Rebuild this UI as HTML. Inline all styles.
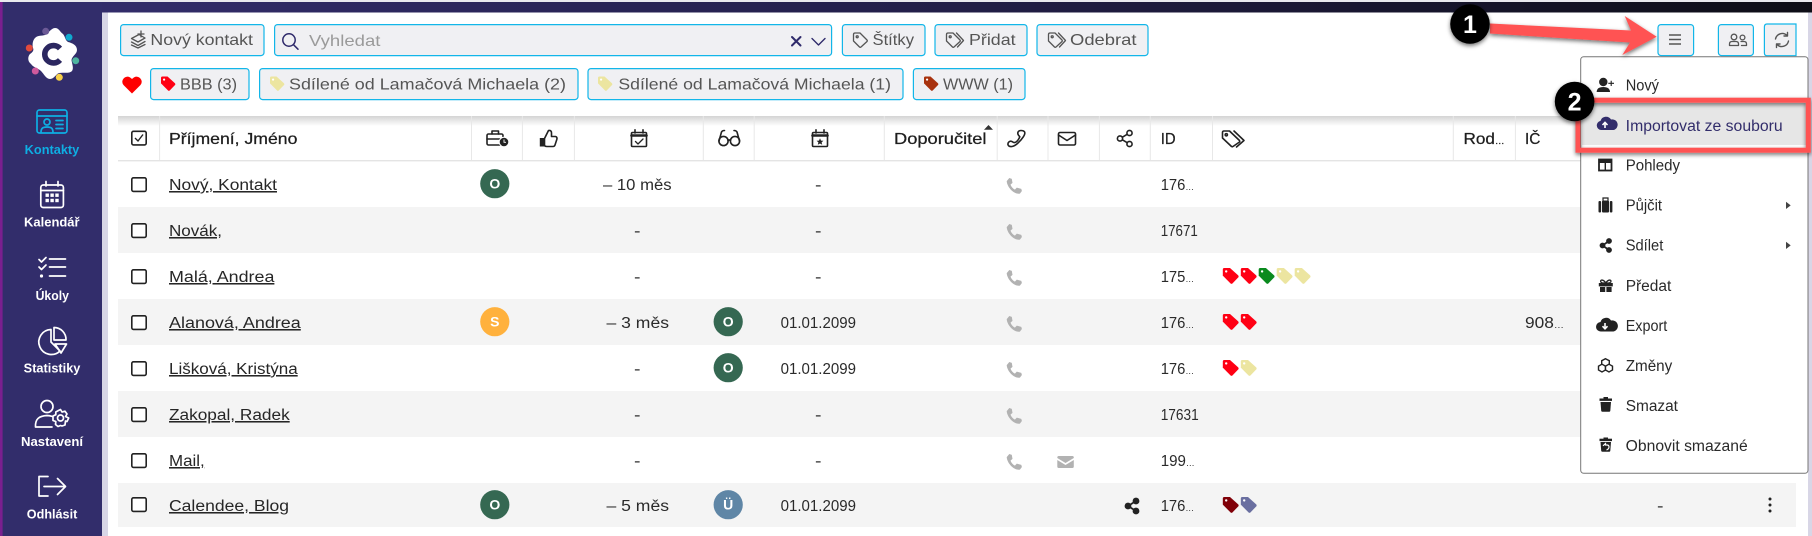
<!DOCTYPE html>
<html lang="cs"><head><meta charset="utf-8"><title>Kontakty</title>
<style>
html,body{margin:0;padding:0;width:1812px;height:536px;overflow:hidden;background:#d8d6e6}
svg{display:block;position:absolute;left:0;top:0;filter:blur(.25px)}
text{font-family:"Liberation Sans",sans-serif;font-size:15.5px;fill:#2a2a2a;white-space:pre}
.b{font-size:16px;fill:#555}
.h{font-size:16px;fill:#1e1e1e;stroke:#1e1e1e;stroke-width:.25}
.n{font-size:15.5px;fill:#262626;text-decoration:underline}
.s{font-size:12.5px;font-weight:bold;fill:#fff}
.m{font-size:15.5px;fill:#2a2a2a}
.e{font-size:9px}
.bd{font-size:14px;font-weight:bold;fill:#fff;text-anchor:middle}
.btn{fill:#f0f0f3;stroke:#12b6e9;stroke-width:1.2}
.w{fill:none;stroke:#fff;stroke-width:1.7;stroke-linecap:round;stroke-linejoin:round}
.k{fill:none;stroke:#222;stroke-width:1.6;stroke-linecap:round;stroke-linejoin:round}
.g{fill:none;stroke:#555;stroke-width:1.3;stroke-linejoin:round;stroke-linecap:round}
</style></head><body>
<svg width="1812" height="536" viewBox="0 0 1812 536" xmlns="http://www.w3.org/2000/svg">
<defs>
<linearGradient id="top" x1="0" x2="1" y1="0" y2="0"><stop offset="0" stop-color="#342e6e"/><stop offset=".5" stop-color="#231f4a"/><stop offset="1" stop-color="#0e0e16"/></linearGradient>
<linearGradient id="hs" x1="0" x2="0" y1="0" y2="1"><stop offset="0" stop-color="#d4d4d4"/><stop offset="1" stop-color="#fff"/></linearGradient>
<filter id="sh" x="-20%" y="-40%" width="140%" height="200%"><feDropShadow dx="0" dy="2" stdDeviation="2" flood-color="#000" flood-opacity=".55"/></filter>
<symbol id="tag" viewBox="0 0 16 16" overflow="visible"><path d="M0 1.5Q0 0 1.5 0H7.2L15.4 7.4Q16.2 8.3 15.6 9.2L9.6 15.5Q8.7 16.3 7.8 15.5L0 7.6Z"/><circle cx="3.4" cy="3.4" r="1.2" fill="#fff"/></symbol>
<symbol id="ph" viewBox="0 0 16 16" overflow="visible"><path d="M3.4 0 5.9.9 6.6 4.9 4.6 6.6C5.3 8.6 7 10.6 9 11.6L10.9 9.6 15.4 10.9 16 13 14 15.6C8 16.6 1.2 9.2.8 3.1Z"/></symbol>
<symbol id="chk" viewBox="0 0 16 15" overflow="visible"><rect x=".8" y=".8" width="14.4" height="13.6" rx="1.6" fill="#fff" stroke="#222" stroke-width="1.6"/></symbol>
</defs>

<!-- shell -->
<rect x="0" y="0" width="1812" height="536" fill="#d8d6e6"/>
<rect x="0" y="0" width="1812" height="2" fill="#e9e9ee"/>
<rect x="0" y="2" width="1812" height="10.5" fill="url(#top)"/>
<rect x="0" y="2" width="102" height="534" fill="#322d6b"/>
<rect x="0" y="2" width="2.6" height="534" fill="#7a1f8f"/>
<rect x="108" y="12.5" width="1700" height="524" fill="#fff"/>

<!-- sidebar -->
<path d="M55 28C59 28 60 32 63 34 65 36 65 40 68 42 72 43 77 45 77 50 77 54 72 56 71.5 60 72 64 74 68 72 71 69 74 63 72 59 73 56 74 54 79 50 79 46 79 44 74 41 71 38 68 34 68 31 64 27 61 28 56 30 54 33 52 34 50 33 48 32 44 33 40 35 38 38 35 42 36 45 35 48 34 51 28 55 28Z" fill="#fff"/>
<path d="M60 48.5A8.7 8.7 0 1 0 60 60" fill="none" stroke="#2b2760" stroke-width="5.6"/>
<circle cx="45.7" cy="31.3" r="3.5" fill="#6c5a96"/><circle cx="69" cy="37.3" r="3.5" fill="#10a9cf"/><circle cx="75.7" cy="60.7" r="3.5" fill="#4fb5a0"/><circle cx="59.3" cy="77.3" r="3.5" fill="#f7d048"/><circle cx="35.3" cy="71" r="3.5" fill="#cf5a9c"/><circle cx="29.3" cy="48" r="3.5" fill="#e24a3c"/>

<g fill="none" stroke="#0eaee3" stroke-width="1.7" stroke-linecap="round">
<rect x="37" y="110" width="30" height="23" rx="2.5"/><path d="M37 116H67"/><circle cx="47" cy="122" r="3"/><path d="M41 132.5C41 128 43 127 47 127S53 128 53 132.5M56 120.5H63M56 124.5H63M56 128.5H63"/>
</g>
<text x="24.7" y="154" class="s" style="fill:#0eaee3" textLength="54.6" lengthAdjust="spacingAndGlyphs">Kontakty</text>

<g class="w"><rect x="40.8" y="185" width="22.6" height="22.5" rx="2.5"/><path d="M40.8 190.5H63.4M46 181.5V186M58 181.5V186"/></g>
<g fill="#fff"><rect x="45.5" y="193.5" width="3.4" height="3.4"/><rect x="50.4" y="193.5" width="3.4" height="3.4"/><rect x="55.3" y="193.5" width="3.4" height="3.4"/><rect x="45.5" y="198.8" width="3.4" height="3.4"/><rect x="50.4" y="198.8" width="3.4" height="3.4"/><rect x="55.3" y="198.8" width="3.4" height="3.4"/></g>
<text x="24" y="226.7" class="s" textLength="55.6" lengthAdjust="spacingAndGlyphs">Kalendář</text>

<g class="w" stroke-width="1.5"><path d="M39 259.5 41.5 262 46 257.5M39 267 41.5 269.5 46 265M49.5 259H65.5M49.5 267H65.5M49.5 276H65.5"/></g><circle cx="41.5" cy="276" r="1.6" fill="#fff"/>
<text x="35.6" y="300" class="s" textLength="33.3" lengthAdjust="spacingAndGlyphs">Úkoly</text>

<g class="w"><path d="M51 329.5A12.5 12.5 0 1 0 60 351L51 342Z"/><path d="M54 327.5A12 12 0 0 1 66 340H54Z"/><path d="M55 344H66.5L61 353Z"/></g>
<text x="23.7" y="372.7" class="s" textLength="56.7" lengthAdjust="spacingAndGlyphs">Statistiky</text>

<g class="w"><circle cx="47" cy="406.5" r="6"/><path d="M35.5 427C35 419 39 416 47 415.5 49 415.5 51 416 52.5 416.5M35.5 427H52"/><circle cx="60.5" cy="418" r="3"/><path d="M60.5 409.5 62 412 65 411.2 67 414 65.5 416.5 68.7 418 67 421.5 65.5 421 65 425 62 426 60.5 425.5 58 426.5 55.5 424.5 55.8 421.5 53 420.5 53 416 55.8 414.7 55.8 412 58.5 410.5Z"/></g>
<text x="21" y="446" class="s" textLength="62" lengthAdjust="spacingAndGlyphs">Nastavení</text>

<g class="w"><path d="M48 476.5H39V496H48M44 486.5H65M57.5 478.5 65.5 486.5 57.5 494.5"/></g>
<text x="26.8" y="518.7" class="s" textLength="50.5" lengthAdjust="spacingAndGlyphs">Odhlásit</text>

<!-- toolbar row 1 -->
<rect class="btn" x="120.6" y="24.6" width="143.4" height="31" rx="3"/>
<g class="g"><path d="M131.5 38.5 139 34.5 145 38 138 42ZM131.5 42 138 45.5 145 41.5M131.5 45 138 48 145 44.5M141 31V37M138 34H144"/></g>
<text x="150.4" y="45" class="b" textLength="102.6" lengthAdjust="spacingAndGlyphs">Nový kontakt</text>

<rect class="btn" x="274.6" y="24.6" width="557" height="31" rx="3"/>
<g fill="none" stroke="#2f2a6b" stroke-width="1.5" stroke-linecap="round"><circle cx="289" cy="40" r="6.2"/><path d="M293.6 44.8 298 49.2"/></g>
<text x="309" y="46" style="font-size:16px;fill:#9a9a9a" textLength="71.4" lengthAdjust="spacingAndGlyphs">Vyhledat</text>
<g fill="none" stroke="#2f2a6b" stroke-linecap="round" stroke-linejoin="round"><path d="M792 37 800.5 45.5M800.5 37 792 45.5" stroke-width="2"/><path d="M812 38.5 818.5 45 825 38.5" stroke-width="1.4"/></g>

<rect class="btn" x="842.4" y="24.6" width="82.6" height="31" rx="3"/>
<g class="g"><path d="M853.5 34.5Q853.5 33 855 33H860L867 40Q867.6 40.8 867 41.5L861 47Q860.2 47.6 859.5 47L853.5 41Z"/><circle cx="857.2" cy="36.8" r="1"/></g>
<text x="872.5" y="45" class="b" textLength="41.5" lengthAdjust="spacingAndGlyphs">Štítky</text>

<rect class="btn" x="935" y="24.6" width="92" height="31" rx="3"/>
<g class="g"><path d="M946.5 34.5Q946.5 33 948 33H953L960 40Q960.6 40.8 960 41.5L954 47Q953.2 47.6 952.5 47L946.5 41Z"/><circle cx="950.2" cy="36.8" r="1"/><path d="M956.5 33 963.5 40.5 957.5 47"/></g>
<text x="969" y="45" class="b" textLength="46.6" lengthAdjust="spacingAndGlyphs">Přidat</text>

<rect class="btn" x="1037" y="24.6" width="111" height="31" rx="3"/>
<g class="g"><path d="M1048.5 34.5Q1048.5 33 1050 33H1055L1062 40Q1062.6 40.8 1062 41.5L1056 47Q1055.2 47.6 1054.5 47L1048.5 41Z"/><circle cx="1052.2" cy="36.8" r="1"/><path d="M1058.5 33 1065.5 40.5 1059.5 47"/></g>
<text x="1070" y="45" class="b" textLength="66.5" lengthAdjust="spacingAndGlyphs">Odebrat</text>

<rect class="btn" x="1658" y="24.6" width="35.6" height="31" rx="3"/>
<path d="M1669 35H1681M1669 39.5H1681M1669 44H1681" stroke="#555" stroke-width="1.4"/>
<rect class="btn" x="1718.4" y="24.6" width="35" height="31" rx="3"/>
<g class="g" stroke-width="1.2"><circle cx="1734" cy="37" r="2.8"/><path d="M1729.5 45.5V44Q1729.5 41.5 1732 41.5H1736Q1738.5 41.5 1738.5 44V45.5Z"/><circle cx="1742.5" cy="37.5" r="2.4"/><path d="M1741 41.5H1744Q1746.5 41.5 1746.5 44V45.5H1741.5"/></g>
<path d="M1796 24H1767Q1764.4 24 1764.4 27V53Q1764.4 55.7 1767 55.7H1796Z" fill="#f0f0f3" stroke="#12b6e9" stroke-width="1.2"/>
<path d="M1775.5 39A6.8 6.8 0 0 1 1787 35.5M1788.5 41A6.8 6.8 0 0 1 1777 44.5M1787.5 32.5V36H1784M1776.5 47.5V44H1780" fill="none" stroke="#555" stroke-width="1.4" stroke-linecap="round" stroke-linejoin="round"/>

<!-- toolbar row 2 -->
<path d="M132 93.5 123.5 85Q120.8 81.5 124 78 128 74.8 132 79 136 74.8 140 78 143.2 81.5 140.5 85Z" fill="#fe0000"/>
<rect class="btn" x="150.6" y="68.6" width="98.4" height="31" rx="3"/>
<use href="#tag" x="161" y="76" width="14.5" height="15.5" fill="#ff0014"/>
<text x="180" y="89.5" class="b" textLength="57" lengthAdjust="spacingAndGlyphs">BBB (3)</text>
<rect class="btn" x="259.6" y="68.6" width="318.4" height="31" rx="3"/>
<use href="#tag" x="270" y="76" width="14.5" height="15.5" fill="#ece5a0"/>
<text x="289" y="89.5" class="b" textLength="277" lengthAdjust="spacingAndGlyphs">Sdílené od Lamačová Michaela (2)</text>
<rect class="btn" x="588" y="68.6" width="315" height="31" rx="3"/>
<use href="#tag" x="598" y="76" width="14.5" height="15.5" fill="#ece5a0"/>
<text x="618.4" y="89.5" class="b" textLength="272.6" lengthAdjust="spacingAndGlyphs">Sdílené od Lamačová Michaela (1)</text>
<rect class="btn" x="913.4" y="68.6" width="111.6" height="31" rx="3"/>
<use href="#tag" x="924" y="76" width="14.5" height="15.5" fill="#a8320e"/>
<text x="943" y="89.5" class="b" textLength="70" lengthAdjust="spacingAndGlyphs">WWW (1)</text>

<!-- header -->
<rect x="118" y="116" width="1678" height="10" fill="url(#hs)"/>
<rect x="118" y="160" width="1678" height="1.4" fill="#e4e4e4"/>
<path d="M159.6 116V160M471.5 116V160M522.4 116V160M574.4 116V160M703.3 116V160M754.2 116V160M884.3 116V160M997.2 116V160M1048 116V160M1099.4 116V160M1150.3 116V160M1212.5 116V160M1453.3 116V160M1515.4 116V160" stroke="#e8e8e8" stroke-width="1"/>
<use href="#chk" x="131" y="130.5" width="16" height="15"/>
<path d="M135 138 138 141 143 134.5" fill="none" stroke="#222" stroke-width="1.4"/>
<text x="169" y="144" class="h" textLength="128.4" lengthAdjust="spacingAndGlyphs">Příjmení, Jméno</text>

<g class="k"><rect x="487" y="134" width="16" height="11" rx="1.5"/><path d="M492 134V131H498.5V134M487 139H503"/></g>
<circle cx="504" cy="142" r="4.8" fill="#222" stroke="#fff" stroke-width="1"/><path d="M504 139.5V142.3H506" stroke="#fff" fill="none" stroke-width=".9"/>
<g class="k"><path d="M544.5 138.5 548.5 130.5Q551.5 130 551.5 133V136.5H555.5Q557.5 137 556.8 139.5L555 145Q554.5 146.5 553 146.5H547Q544.5 146.5 544.5 145Z"/></g><rect x="539.8" y="138" width="4.5" height="8.5" fill="#222"/>
<g class="k"><rect x="631.5" y="132.5" width="15" height="14" rx="1"/><path d="M635 129.8V133M643 129.8V133"/><path d="M631.5 135.5H646.5" stroke-width="2.6"/><path d="M635.5 141.5 638 144 643 139" stroke-width="1.3"/></g>
<g class="k"><circle cx="723.5" cy="141" r="4.6"/><circle cx="735" cy="141" r="4.6"/><path d="M728 140.5Q729.2 139.5 730.5 140.5M719 141 721.5 132Q722.2 130.5 724.5 130.5M739.5 141 737 132Q736.2 130.5 734 130.5"/></g>
<g class="k"><rect x="812.5" y="132.5" width="15" height="14" rx="1"/><path d="M816 129.8V133M824 129.8V133"/><path d="M812.5 135.5H827.5" stroke-width="2.6"/></g><path d="M820 138.3 821 140.6 823.4 140.8 821.6 142.4 822.2 144.8 820 143.5 817.8 144.8 818.4 142.4 816.6 140.8 819 140.6Z" fill="#222"/>
<text x="894" y="144" class="h" textLength="92.5" lengthAdjust="spacingAndGlyphs">Doporučitel</text>
<path d="M984 129.7 988.5 125 993 129.7Z" fill="#333"/>
<g class="k"><path d="M1021 130.5C1018 130.5 1017 133 1018.5 135.2L1019.8 136.8C1018 141 1015 144 1012.5 141.8 1010 140 1007.5 142.5 1008 144.8 1009.5 148 1014 146.5 1017.5 143.5 1022 139.5 1026 134 1024.5 131.8 1023.5 130.5 1022 130.5 1021 130.5Z"/></g>
<g class="k"><rect x="1058.5" y="132.5" width="17" height="12.5" rx="1.5"/><path d="M1058.5 135 1067 140.5 1075.5 135"/></g>
<g class="k" stroke-width="1.4"><circle cx="1129.5" cy="133" r="2.6"/><circle cx="1120" cy="138.5" r="2.6"/><circle cx="1129.5" cy="144" r="2.6"/><path d="M1122.4 137.2 1127.2 134.3M1122.4 139.8 1127.2 142.7"/></g>
<text x="1160.7" y="144" class="h" textLength="14.9" lengthAdjust="spacingAndGlyphs">ID</text>
<g class="k" stroke-width="1.4"><path d="M1222.5 132.5Q1222.5 131 1224 131H1229.5L1239.5 140.5Q1240 141.3 1239.5 142L1233 146.5Q1232.2 147 1231.5 146.5L1222.5 138Z"/><circle cx="1226.3" cy="134.8" r="1.1"/><path d="M1234 131 1244 140.5 1236.5 147"/></g>
<text x="1463.5" y="144" class="h" textLength="41" lengthAdjust="spacingAndGlyphs">Rod<tspan class="e">…</tspan></text>
<text x="1525" y="144" class="h" textLength="15.4" lengthAdjust="spacingAndGlyphs">IČ</text>

<!-- rows -->
<rect x="118" y="207" width="1678" height="46" fill="#f4f4f4"/>
<rect x="118" y="299" width="1678" height="46" fill="#f4f4f4"/>
<rect x="118" y="391" width="1678" height="46" fill="#f4f4f4"/>
<rect x="118" y="483" width="1678" height="44" fill="#f4f4f4"/>

<use href="#chk" x="131" y="177" width="16" height="15"/>
<use href="#chk" x="131" y="223" width="16" height="15"/>
<use href="#chk" x="131" y="269" width="16" height="15"/>
<use href="#chk" x="131" y="315" width="16" height="15"/>
<use href="#chk" x="131" y="361" width="16" height="15"/>
<use href="#chk" x="131" y="407" width="16" height="15"/>
<use href="#chk" x="131" y="453" width="16" height="15"/>
<use href="#chk" x="131" y="497" width="16" height="15"/>

<text x="169" y="190" class="n" textLength="108" lengthAdjust="spacingAndGlyphs">Nový, Kontakt</text>
<text x="169" y="236" class="n" textLength="53" lengthAdjust="spacingAndGlyphs">Novák,</text>
<text x="169" y="282" class="n" textLength="105.4" lengthAdjust="spacingAndGlyphs">Malá, Andrea</text>
<text x="169" y="328" class="n" textLength="131.8" lengthAdjust="spacingAndGlyphs">Alanová, Andrea</text>
<text x="169" y="374" class="n" textLength="128.7" lengthAdjust="spacingAndGlyphs">Lišková, Kristýna</text>
<text x="169" y="420" class="n" textLength="120.7" lengthAdjust="spacingAndGlyphs">Zakopal, Radek</text>
<text x="169" y="466" class="n" textLength="35.7" lengthAdjust="spacingAndGlyphs">Mail,</text>
<text x="169" y="511" class="n" textLength="120" lengthAdjust="spacingAndGlyphs">Calendee, Blog</text>

<circle cx="494.8" cy="183.7" r="14.6" fill="#356852"/><text x="494.8" y="188.6" class="bd">O</text>
<circle cx="494.8" cy="321.7" r="14.6" fill="#ffb13d"/><text x="494.8" y="326.6" class="bd">S</text>
<circle cx="494.8" cy="504.7" r="14.6" fill="#356852"/><text x="494.8" y="509.6" class="bd">O</text>
<circle cx="728.2" cy="321.7" r="14.6" fill="#356852"/><text x="728.2" y="326.6" class="bd">O</text>
<circle cx="728.2" cy="367.7" r="14.6" fill="#356852"/><text x="728.2" y="372.6" class="bd">O</text>
<circle cx="728.2" cy="504.7" r="14.6" fill="#5f86a6"/><text x="728.2" y="509.6" class="bd">Ü</text>

<text x="603" y="190" textLength="68.6" lengthAdjust="spacingAndGlyphs">– 10 měs</text>
<text x="634" y="236" textLength="6.5" lengthAdjust="spacingAndGlyphs">-</text>
<text x="634" y="282" textLength="6.5" lengthAdjust="spacingAndGlyphs">-</text>
<text x="606.5" y="328" textLength="62.5" lengthAdjust="spacingAndGlyphs">– 3 měs</text>
<text x="634" y="374" textLength="6.5" lengthAdjust="spacingAndGlyphs">-</text>
<text x="634" y="420" textLength="6.5" lengthAdjust="spacingAndGlyphs">-</text>
<text x="634" y="466" textLength="6.5" lengthAdjust="spacingAndGlyphs">-</text>
<text x="606.5" y="511" textLength="62.5" lengthAdjust="spacingAndGlyphs">– 5 měs</text>

<text x="815" y="190" textLength="6.5" lengthAdjust="spacingAndGlyphs">-</text>
<text x="815" y="236" textLength="6.5" lengthAdjust="spacingAndGlyphs">-</text>
<text x="815" y="282" textLength="6.5" lengthAdjust="spacingAndGlyphs">-</text>
<text x="780.6" y="328" textLength="75.4" lengthAdjust="spacingAndGlyphs">01.01.2099</text>
<text x="780.6" y="374" textLength="75.4" lengthAdjust="spacingAndGlyphs">01.01.2099</text>
<text x="815" y="420" textLength="6.5" lengthAdjust="spacingAndGlyphs">-</text>
<text x="815" y="466" textLength="6.5" lengthAdjust="spacingAndGlyphs">-</text>
<text x="780.6" y="511" textLength="75.4" lengthAdjust="spacingAndGlyphs">01.01.2099</text>

<use href="#ph" x="1005.7" y="178" width="16.4" height="16" fill="#b2b2b2"/>
<use href="#ph" x="1005.7" y="224" width="16.4" height="16" fill="#b2b2b2"/>
<use href="#ph" x="1005.7" y="270" width="16.4" height="16" fill="#b2b2b2"/>
<use href="#ph" x="1005.7" y="316" width="16.4" height="16" fill="#b2b2b2"/>
<use href="#ph" x="1005.7" y="362" width="16.4" height="16" fill="#b2b2b2"/>
<use href="#ph" x="1005.7" y="408" width="16.4" height="16" fill="#b2b2b2"/>
<use href="#ph" x="1005.7" y="454" width="16.4" height="16" fill="#b2b2b2"/>
<path d="M1058.8 456H1072.3Q1073.8 456 1073.8 457.5V458L1065.5 463 1057.3 458V457.5Q1057.3 456 1058.8 456ZM1057.3 460 1065.5 465 1073.8 460V466.5Q1073.8 468 1072.3 468H1058.8Q1057.3 468 1057.3 466.5Z" fill="#b2b2b2"/>
<g fill="#222"><circle cx="1136" cy="501" r="3.4"/><circle cx="1128" cy="506" r="3.4"/><circle cx="1136" cy="511" r="3.4"/><path d="M1128 506 1136 501M1128 506 1136 511" stroke="#222" stroke-width="1.8"/></g>

<text x="1160.7" y="190" textLength="33.3" lengthAdjust="spacingAndGlyphs">176<tspan class="e">…</tspan></text>
<text x="1160.7" y="236" textLength="37.1" lengthAdjust="spacingAndGlyphs">17671</text>
<text x="1160.7" y="282" textLength="33.3" lengthAdjust="spacingAndGlyphs">175<tspan class="e">…</tspan></text>
<text x="1160.7" y="328" textLength="33.3" lengthAdjust="spacingAndGlyphs">176<tspan class="e">…</tspan></text>
<text x="1160.7" y="374" textLength="33.3" lengthAdjust="spacingAndGlyphs">176<tspan class="e">…</tspan></text>
<text x="1160.7" y="420" textLength="38" lengthAdjust="spacingAndGlyphs">17631</text>
<text x="1160.7" y="466" textLength="34" lengthAdjust="spacingAndGlyphs">199<tspan class="e">…</tspan></text>
<text x="1160.7" y="511" textLength="33.3" lengthAdjust="spacingAndGlyphs">176<tspan class="e">…</tspan></text>

<use href="#tag" x="1222.6" y="268" width="16.4" height="16" fill="#ff0014"/>
<use href="#tag" x="1240.6" y="268" width="16.4" height="16" fill="#ff0014"/>
<use href="#tag" x="1258.5" y="268" width="16.4" height="16" fill="#0a8a1e"/>
<use href="#tag" x="1276.5" y="268" width="16.4" height="16" fill="#ece5a0"/>
<use href="#tag" x="1294.5" y="268" width="16.4" height="16" fill="#ece5a0"/>
<use href="#tag" x="1222.6" y="314" width="16.4" height="16" fill="#ff0014"/>
<use href="#tag" x="1240.6" y="314" width="16.4" height="16" fill="#ff0014"/>
<use href="#tag" x="1222.6" y="360" width="16.4" height="16" fill="#ff0014"/>
<use href="#tag" x="1240.6" y="360" width="16.4" height="16" fill="#ece5a0"/>
<use href="#tag" x="1222.6" y="497" width="16.4" height="16" fill="#800008"/>
<use href="#tag" x="1240.6" y="497" width="16.4" height="16" fill="#6a6fa0"/>

<text x="1525" y="328" textLength="39" lengthAdjust="spacingAndGlyphs">908<tspan class="e">…</tspan></text>
<text x="1657" y="511" textLength="6.5" lengthAdjust="spacingAndGlyphs">-</text>
<g fill="#222"><circle cx="1770" cy="499" r="1.5"/><circle cx="1770" cy="505" r="1.5"/><circle cx="1770" cy="511" r="1.5"/></g>

<!-- menu -->
<rect x="1580.7" y="56.7" width="227.3" height="416.6" rx="3" fill="#fff" stroke="#777" stroke-width="1"/>
<rect x="1581" y="103" width="225" height="42" fill="#e6e6e6"/>

<g fill="#222">
<circle cx="1603.3" cy="82" r="4.2"/><path d="M1596.7 92Q1596.7 87 1603.3 87T1610 92Z"/><path d="M1608.3 83.3H1614M1611.2 80.7V86" stroke="#222" stroke-width="1.1"/>
</g>
<text x="1625.7" y="90.7" class="m" textLength="33.3" lengthAdjust="spacingAndGlyphs">Nový</text>

<path d="M1601 130A4.6 4.6 0 0 1 1600.5 120.9 5.8 5.8 0 0 1 1611 119.5 5.2 5.2 0 0 1 1613.5 130Z" fill="#322d6b"/>
<path d="M1605 128V122.8M1602.5 125 1605 122.4 1607.5 125" fill="none" stroke="#fff" stroke-width="1.6"/>
<text x="1625.7" y="131" class="m" style="fill:#322d6b" textLength="157" lengthAdjust="spacingAndGlyphs">Importovat ze souboru</text>

<g fill="none" stroke="#222"><rect x="1599" y="159.5" width="12.5" height="11" stroke-width="1.8"/><path d="M1605.3 159.5V170.5" stroke-width="1.4"/><path d="M1599 161.5H1611.5" stroke-width="3"/></g>
<text x="1625.7" y="170.7" class="m" textLength="54.3" lengthAdjust="spacingAndGlyphs">Pohledy</text>

<g fill="#222"><rect x="1598.5" y="201" width="2.6" height="11.5" rx="1"/><rect x="1609.8" y="201" width="2.6" height="11.5" rx="1"/><rect x="1602" y="200.5" width="7" height="12" rx="1"/><path d="M1603 200.5V198H1608V200.5" fill="none" stroke="#222" stroke-width="1.2"/></g>
<text x="1625.7" y="210.7" class="m" textLength="36.3" lengthAdjust="spacingAndGlyphs">Půjčit</text>
<path d="M1786 201.7 1790.7 205.4 1786 209Z" fill="#444"/>

<g fill="#222"><circle cx="1609" cy="241" r="2.9"/><circle cx="1602.5" cy="245.5" r="2.9"/><circle cx="1609" cy="250" r="2.9"/><path d="M1602.5 245.5 1609 241M1602.5 245.5 1609 250" stroke="#222" stroke-width="1.7"/></g>
<text x="1625.7" y="250.7" class="m" textLength="37.6" lengthAdjust="spacingAndGlyphs">Sdílet</text>
<path d="M1786 241.7 1790.7 245.4 1786 249Z" fill="#444"/>

<g fill="#222"><rect x="1598.8" y="283" width="14" height="3.4"/><rect x="1600" y="287" width="5.2" height="5"/><rect x="1606.4" y="287" width="5.2" height="5"/><path d="M1605.8 283C1603.3 279 1599.8 279.5 1600.8 282L1602.3 283ZM1605.8 283C1608.3 279 1611.8 279.5 1610.8 282L1609.3 283Z" fill="none" stroke="#222" stroke-width="1.3"/></g>
<text x="1625.7" y="291" class="m" textLength="45.6" lengthAdjust="spacingAndGlyphs">Předat</text>

<path d="M1601 331.5A4.6 4.6 0 0 1 1600.5 322 5.8 5.8 0 0 1 1611 320.5 5.2 5.2 0 0 1 1613.5 331.5Z" fill="#222"/>
<path d="M1605 323V328.5M1602.5 326.2 1605 328.8 1607.5 326.2" fill="none" stroke="#fff" stroke-width="1.6"/>
<text x="1625.7" y="331" class="m" textLength="41.6" lengthAdjust="spacingAndGlyphs">Export</text>

<g fill="#fff" stroke="#222" stroke-width="1.4"><path d="M1605.5 358.7 1609.3 360.7V364.7L1605.5 366.7 1601.7 364.7V360.7Z"/><path d="M1602 364.2 1605.5 366.2V370L1602 372 1598.5 370V366.2Z"/><path d="M1609 364.2 1612.5 366.2V370L1609 372 1605.5 370V366.2Z"/></g>
<text x="1625.7" y="371" class="m" textLength="46.6" lengthAdjust="spacingAndGlyphs">Změny</text>

<g fill="#222"><rect x="1599.5" y="398.5" width="12.5" height="2.4"/><rect x="1603.5" y="397" width="4.5" height="2"/><path d="M1600.5 402H1611L1610.3 410.7Q1610.2 411.7 1609.3 411.7H1602.3Q1601.3 411.7 1601.2 410.7Z"/></g>
<text x="1625.7" y="411" class="m" textLength="52.3" lengthAdjust="spacingAndGlyphs">Smazat</text>

<g fill="#222"><rect x="1599.5" y="438.7" width="12.5" height="2.4"/><rect x="1603.5" y="437.5" width="4.5" height="2"/><path d="M1600.5 442H1611L1610.3 450.7Q1610.2 451.7 1609.3 451.7H1602.3Q1601.3 451.7 1601.2 450.7Z"/></g>
<path d="M1603 445.8 1605.5 443.6V445H1607Q1609 445 1609 447T1606.5 450" fill="none" stroke="#fff" stroke-width="1.2"/>
<text x="1625.7" y="451" class="m" textLength="122" lengthAdjust="spacingAndGlyphs">Obnovit smazané</text>

<!-- annotations -->
<rect x="1578" y="100.2" width="230.3" height="50" fill="none" stroke="#ff5252" stroke-width="5" filter="url(#sh)"/>
<path d="M1490 23.5 1631 30.5 1624.7 16 1656.7 36.7 1622.3 55 1630 42.5 1490 33.5Z" fill="#ff5252" filter="url(#sh)"/>
<circle cx="1470" cy="24" r="19.8" fill="#000" filter="url(#sh)"/>
<text x="1470" y="33" text-anchor="middle" style="font-size:25px;font-weight:bold;fill:#fff">1</text>
<circle cx="1574.6" cy="101.5" r="19.8" fill="#000" filter="url(#sh)"/>
<text x="1574.6" y="110.5" text-anchor="middle" style="font-size:25px;font-weight:bold;fill:#fff">2</text>
</svg>
</body></html>
